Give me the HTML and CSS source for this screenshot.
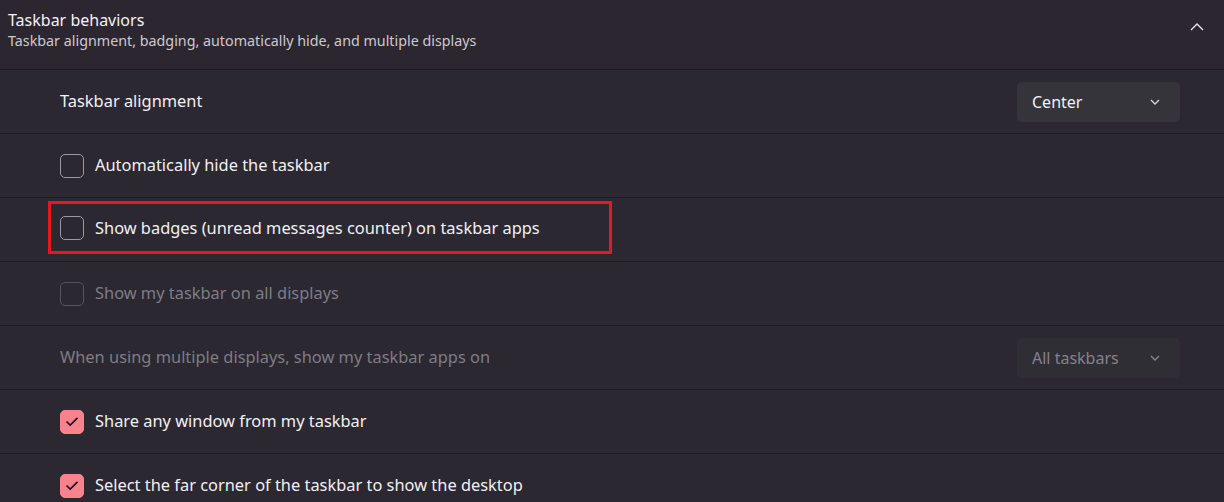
FILE: index.html
```html
<!DOCTYPE html>
<html>
<head>
<meta charset="utf-8">
<link rel="stylesheet" href="styles.css">
</head>
<body>
<div class="panel">
  <div class="header">
    <div class="header-text">
      <div class="title">Taskbar behaviors</div>
      <div class="subtitle">Taskbar alignment, badging, automatically hide, and multiple displays</div>
    </div>
    <svg class="chev-up" width="14" height="8" viewBox="0 0 14 8"><path d="M1 7 L7 1 L13 7" fill="none" stroke="#e8e6ea" stroke-width="1.4"/></svg>
  </div>
  <div class="row plain">
    <span class="label">Taskbar alignment</span>
    <div class="select"><span>Center</span><svg width="10" height="6" viewBox="0 0 10 6"><path d="M1 1 L5 5 L9 1" fill="none" stroke="#d8d6da" stroke-width="1.3"/></svg></div>
  </div>
  <div class="row">
    <span class="box"></span><span class="label">Automatically hide the taskbar</span>
  </div>
  <div class="row">
    <div class="highlight">
      <span class="box"></span><span class="label">Show badges (unread messages counter) on taskbar apps</span>
    </div>
  </div>
  <div class="row disabled">
    <span class="box"></span><span class="label">Show my taskbar on all displays</span>
  </div>
  <div class="row plain disabled">
    <span class="label">When using multiple displays, show my taskbar apps on</span>
    <div class="select"><span>All taskbars</span><svg width="10" height="6" viewBox="0 0 10 6"><path d="M1 1 L5 5 L9 1" fill="none" stroke="#8a888e" stroke-width="1.3"/></svg></div>
  </div>
  <div class="row">
    <span class="box checked"><svg width="14" height="11" viewBox="0 0 14 11"><path d="M1.5 5.5 L5.2 9 L12.5 1.8" fill="none" stroke="#1a1418" stroke-width="1.7"/></svg></span><span class="label">Share any window from my taskbar</span>
  </div>
  <div class="row">
    <span class="box checked"><svg width="14" height="11" viewBox="0 0 14 11"><path d="M1.5 5.5 L5.2 9 L12.5 1.8" fill="none" stroke="#1a1418" stroke-width="1.7"/></svg></span><span class="label">Select the far corner of the taskbar to show the desktop</span>
  </div>
</div>
</body>
</html>
```
FILE: styles.css
```css
html, body {
  margin: 0;
  padding: 0;
  background: #2b2831;
  font-family: "Noto Sans", "Open Sans", sans-serif;
  color: #ffffff;
  overflow: hidden;
}
.panel {
  width: 1224px;
}
.header {
  height: 69px;
  border-bottom: 1px solid #1c1a20;
  background: #2c2630;
  display: flex;
  align-items: flex-start;
  justify-content: space-between;
  padding: 0 20px 0 8px;
}
.header-text {
  padding-top: 9px;
}
.title {
  font-size: 16px;
  line-height: 22px;
  color: #f4f2f6;
}
.subtitle {
  font-size: 14.3px;
  line-height: 20px;
  color: #cdc9d1;
}
.chev-up {
  margin-top: 23px;
}
.row {
  height: 63px;
  border-bottom: 1px solid #1e1c22;
  display: flex;
  align-items: center;
  padding-left: 60px;
  padding-right: 44px;
  position: relative;
}
.row.plain {
  justify-content: space-between;
}
.label {
  font-size: 16.4px;
  color: #f2f0f4;
  position: relative;
  top: -1px;
}
.box {
  width: 24px;
  height: 24px;
  box-sizing: border-box;
  border: 1px solid #9c99a2;
  border-radius: 5px;
  margin-right: 11px;
  display: flex;
  align-items: center;
  justify-content: center;
  flex: none;
}
.box.checked {
  background: #f8838f;
  border-color: #f8838f;
}
.disabled .label {
  color: #7f7c85;
}
.disabled .box {
  border-color: #56535c;
}
.select {
  width: 163px;
  height: 40px;
  box-sizing: border-box;
  background: #36343b;
  border-radius: 5px;
  display: flex;
  align-items: center;
  justify-content: space-between;
  padding: 0 20px 0 15px;
  font-size: 16px;
  color: #f2f0f4;
}
.disabled .select {
  background: #302e35;
  color: #85828a;
}
.highlight {
  position: absolute;
  left: 48px;
  top: 3px;
  width: 564px;
  height: 53px;
  box-sizing: border-box;
  border: 3px solid #e8161f;
  display: flex;
  align-items: center;
  padding-left: 9px;
}
.highlight .label {
  top: 0;
}
```
